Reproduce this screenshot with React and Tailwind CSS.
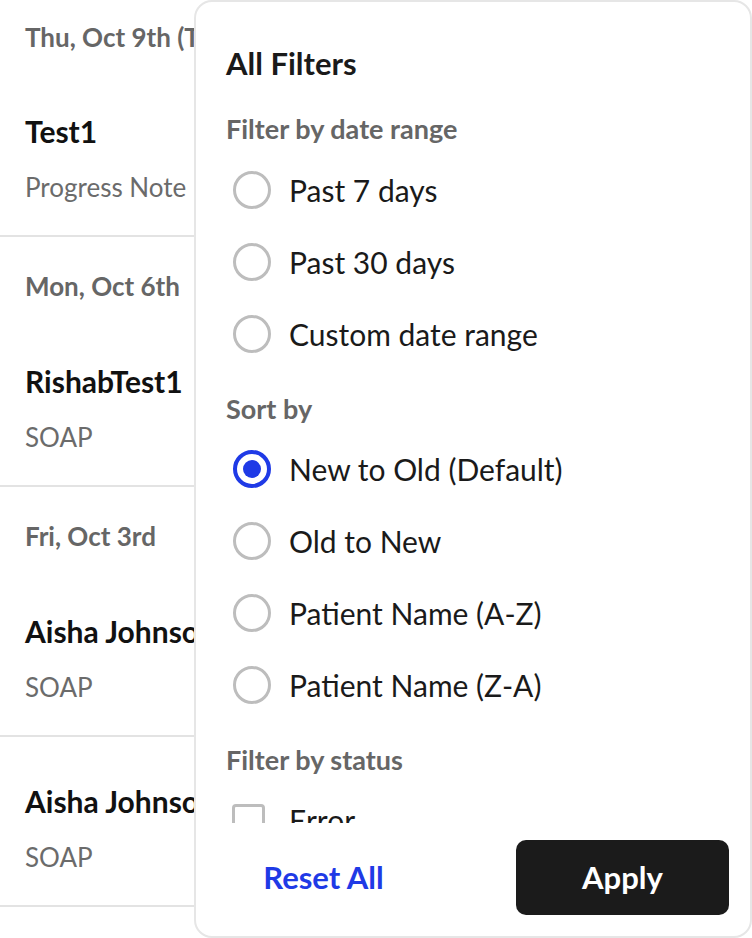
import React, { useState } from 'react';

// left-hand note list (partly covered by the filter sheet)
const notes = [
  { date: 'Thu, Oct 9th (Today)', name: 'Test1', type: 'Progress Note' },
  { date: 'Mon, Oct 6th', name: 'RishabTest1', type: 'SOAP' },
  { date: 'Fri, Oct 3rd', name: 'Aisha Johnson', type: 'SOAP' },
  { date: null, name: 'Aisha Johnson', type: 'SOAP' },
];

const dateOptions = ['Past 7 days', 'Past 30 days', 'Custom date range'];
const sortOptions = ['New to Old (Default)', 'Old to New', 'Patient Name (A-Z)', 'Patient Name (Z-A)'];

const Radio = ({ checked }) =>
  checked ? (
    <span className="ml-[7px] flex h-[38px] w-[38px] shrink-0 items-center justify-center rounded-full border-[4px] border-[#1f3ae6]">
      <span className="h-[18px] w-[18px] rounded-full bg-[#1f3ae6]" />
    </span>
  ) : (
    <span className="ml-[7px] h-[38px] w-[38px] shrink-0 rounded-full border-[3px] border-[#bdbdbd]" />
  );

const OptionRow = ({ label, checked, onClick }) => (
  <button onClick={onClick} className="flex h-[72px] w-full items-center text-left">
    <Radio checked={checked} />
    <span className="ml-[18px] text-[30px] leading-[36px] text-[#1a1a1a]">{label}</span>
  </button>
);

const SectionTitle = ({ children, className = '' }) => (
  <h3 className={`text-[27px] font-bold leading-[36px] text-[#666666] ${className}`}>{children}</h3>
);

export default function App() {
  const [range, setRange] = useState(null);
  const [sort, setSort] = useState(0);

  return (
    <div className="relative h-[938px] w-[752px] overflow-hidden bg-white font-['Lato','Noto_Sans',sans-serif]">
      {/* Notes list */}
      <div className="flex flex-col">
        {notes.map((note, i) => (
          <div key={i} className="border-b-2 border-[#e3e3e3]">
            {note.date && (
              <div className={`${i === 0 ? 'h-[67px] pt-[23px]' : 'h-[80px] pt-[35px]'} px-[25px]`}>
                <p className="whitespace-nowrap text-[26px] font-bold leading-[28px] text-[#666666]">{note.date}</p>
              </div>
            )}
            <div className="h-[168px] px-[25px] pt-[46px]">
              <p className="whitespace-nowrap text-[30px] font-bold leading-[36px] text-[#111111]">{note.name}</p>
              <p className="mt-[22px] whitespace-nowrap text-[26px] leading-[32px] text-[#6b6b6b]">{note.type}</p>
            </div>
          </div>
        ))}
      </div>

      {/* Filter sheet, laid over the list */}
      <div className="absolute left-[194px] top-0 flex h-[938px] w-[558px] flex-col rounded-[18px] border-2 border-[#e6e6e6] bg-white">
        <div className="flex-1 overflow-hidden px-[30px] pt-[43px]">
          <h2 className="text-[31px] font-bold leading-[36px] text-[#1a1a1a]">All Filters</h2>

          <SectionTitle className="mt-[30px] mb-[7px]">Filter by date range</SectionTitle>
          {dateOptions.map((label, i) => (
            <OptionRow key={label} label={label} checked={range === i} onClick={() => setRange(i)} />
          ))}

          <SectionTitle className="mt-[21px] mb-[6px]">Sort by</SectionTitle>
          {sortOptions.map((label, i) => (
            <OptionRow key={label} label={label} checked={sort === i} onClick={() => setSort(i)} />
          ))}

          <SectionTitle className="mt-[21px] mb-[6px]">Filter by status</SectionTitle>
          <label className="flex h-[72px] items-center">
            <span className="ml-[6px] h-[33px] w-[33px] shrink-0 rounded-[4px] border-[3px] border-[#bdbdbd]" />
            <span className="ml-[24px] text-[30px] leading-[36px] text-[#1a1a1a]">Error</span>
          </label>
        </div>

        {/* Footer actions */}
        <div className="flex h-[113px] shrink-0 items-start justify-between px-[21px] pt-[17px]">
          <button
            onClick={() => { setRange(null); setSort(0); }}
            className="flex h-[75px] w-[213px] items-center justify-center text-[31px] font-bold text-[#1f3ae6]"
          >
            Reset All
          </button>
          <button className="flex h-[75px] w-[213px] items-center justify-center rounded-[10px] bg-[#1b1b1b] text-[31px] font-bold text-white">
            Apply
          </button>
        </div>
      </div>
    </div>
  );
}
